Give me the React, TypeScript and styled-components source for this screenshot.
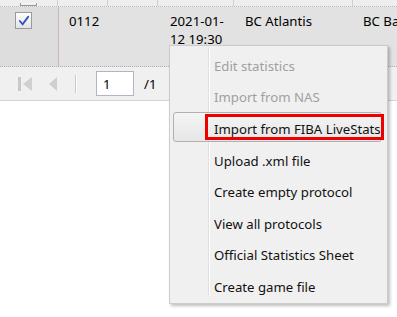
import React from "react";
import styled, { createGlobalStyle } from "styled-components";

const GlobalStyle = createGlobalStyle`
  body {
    margin: 0;
    background: #ffffff;
    font-family: "Noto Sans", "DejaVu Sans", sans-serif;
    font-size: 13.2px;
    color: #000;
  }
`;

const Page = styled.div`
  position: relative;
  width: 397px;
  height: 317px;
  overflow: hidden;
`;

const HeaderStrip = styled.div`
  display: grid;
  grid-template-columns: 58px 50px 50px 76px 119px 1fr;
  height: 6px;
  background: #eeeeee;
  border-bottom: 1px dotted #b8b8b8;
  overflow: hidden;
`;

const HeaderCell = styled.div`
  border-right: 1px solid #d0d0d0;
  display: flex;
  justify-content: center;
  align-items: flex-end;
`;

const Row = styled.div`
  display: grid;
  grid-template-columns: 59px 101px 75px 118px 1fr;
  height: 59px;
  background: #e2e2e2;
  border-bottom: 1px dotted #b0b0b0;
`;

const CheckCell = styled.div`
  background: #dddddd;
  border-right: 1px solid #cdb3b3;
  padding: 5px 0 0 15px;
`;

const Cell = styled.div`
  padding: 5px 0 0 10px;
  line-height: 18px;
  white-space: nowrap;
`;

const Box = styled.div<{ $cut?: boolean }>`
  width: 15px;
  height: ${(p) => (p.$cut ? "2px" : "15px")};
  border: 1px solid #9a9a9a;
  border-top: ${(p) => (p.$cut ? "none" : "1px solid #9a9a9a")};
  background: linear-gradient(#fdfdfd, #e4e4e4);
  display: flex;
  align-items: center;
  justify-content: center;
`;

const Pager = styled.div`
  display: flex;
  align-items: center;
  height: 33px;
  background: #f0f0f0;
  border-bottom: 1px solid #d6d6d6;
  padding-left: 17px;
`;

const PagerBtn = styled.div<{ $gap: number }>`
  height: 16px;
  display: flex;
  align-items: center;
  margin-right: ${(p) => p.$gap}px;
`;

const Sep = styled.div`
  width: 1px;
  height: 18px;
  background: #c8c8c8;
  border-right: 1px solid #ffffff;
  margin: 0 19px 0 17px;
`;

const PageInput = styled.div`
  width: 38px;
  height: 25px;
  box-sizing: border-box;
  border: 1px solid #b4b4c4;
  background: #ffffff;
  display: flex;
  align-items: center;
  padding-left: 6px;
`;

const PageTotal = styled.span`
  margin-left: 10px;
`;

const Menu = styled.div`
  position: absolute;
  left: 169px;
  top: 45px;
  width: 219px;
  height: 259px;
  box-sizing: border-box;
  background: #f0f0f0;
  border: 1px solid #cccccc;
  box-shadow: 2px 2px 3px rgba(0, 0, 0, 0.25);
  padding-top: 4px;
`;

const Gutter = styled.div`
  position: absolute;
  left: 38px;
  top: 2px;
  bottom: 6px;
  width: 1px;
  background: #e0e0e0;
  border-right: 1px solid #ffffff;
`;

const Item = styled.div<{ $disabled?: boolean }>`
  position: relative;
  height: 31.6px;
  display: flex;
  align-items: center;
  padding-left: 44px;
  color: ${(p) => (p.$disabled ? "#a0a0a0" : "#111111")};
  white-space: nowrap;
`;

const Highlight = styled.div`
  position: absolute;
  left: 3px;
  right: 5px;
  top: -1px;
  height: 30px;
  box-sizing: border-box;
  border: 1px solid #b0b0b0;
  border-radius: 3px;
  background: linear-gradient(#f4f4f4, #e6e6e6);
`;

const Marker = styled.div`
  position: absolute;
  left: 35px;
  right: 3px;
  top: 1px;
  height: 26px;
  box-sizing: border-box;
  border: 3px solid #ee0000;
`;

const Label = styled.span`
  position: relative;
`;

const items = [
  { label: "Edit statistics", disabled: true },
  { label: "Import from NAS", disabled: true },
  { label: "Import from FIBA LiveStats", active: true },
  { label: "Upload .xml file" },
  { label: "Create empty protocol" },
  { label: "View all protocols" },
  { label: "Official Statistics Sheet" },
  { label: "Create game file" },
];

function Check() {
  return (
    <svg width="12" height="12" viewBox="0 0 13 13">
      <path
        d="M2 6.5 L5 10 L11 2"
        fill="none"
        stroke="#3050c8"
        strokeWidth="2"
        strokeLinecap="round"
      />
    </svg>
  );
}

export default function App() {
  return (
    <Page>
      <GlobalStyle />
      <HeaderStrip>
        <HeaderCell>
          <Box $cut />
        </HeaderCell>
        <HeaderCell />
        <HeaderCell />
        <HeaderCell />
        <HeaderCell />
        <div />
      </HeaderStrip>
      <Row>
        <CheckCell>
          <Box>
            <Check />
          </Box>
        </CheckCell>
        <Cell>0112</Cell>
        <Cell>
          2021-01-
          <br />
          12 19:30
        </Cell>
        <Cell>BC Atlantis</Cell>
        <Cell>BC Ba</Cell>
      </Row>
      <Pager>
        <PagerBtn $gap={15}>
          <svg width="16" height="14" viewBox="0 0 16 14">
            <rect x="1" y="0" width="3" height="14" fill="#c8c8c8" />
            <path d="M15 0 L15 14 L6 7 Z" fill="#d0d0d0" />
          </svg>
        </PagerBtn>
        <PagerBtn $gap={0}>
          <svg width="10" height="14" viewBox="0 0 10 14">
            <path d="M9 0 L9 14 L1 7 Z" fill="#cfcfcf" />
          </svg>
        </PagerBtn>
        <Sep />
        <PageInput>1</PageInput>
        <PageTotal>/1</PageTotal>
        <Sep />
      </Pager>
      <Menu>
        <Gutter />
        {items.map((it) => (
          <Item key={it.label} $disabled={it.disabled}>
            {it.active && <Highlight />}
            {it.active && <Marker />}
            <Label>{it.label}</Label>
          </Item>
        ))}
      </Menu>
    </Page>
  );
}
